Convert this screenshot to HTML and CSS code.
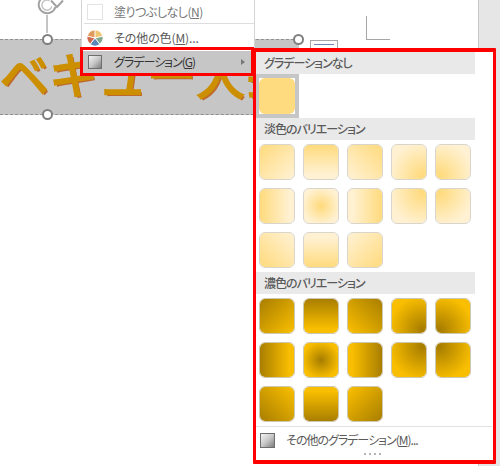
FILE: index.html
```html
<!DOCTYPE html>
<html lang="ja">
<head>
<meta charset="utf-8">
<title>グラデーション</title>
<link rel="stylesheet" href="styles.css">
</head>
<body>
<div class="stage">
  <div class="side-pane"></div>

  <svg class="rotate-icon" width="30" height="34" viewBox="0 0 30 34" aria-hidden="true">
    <path d="M17.5 -2 A8.5 8.5 0 1 0 20.4 7" fill="none" stroke="#a2a2a2" stroke-width="2"/>
    <path d="M14.5 0.8 A5 5 0 1 0 16.8 6.4" fill="none" stroke="#c4c4c4" stroke-width="1.5"/>
    <path d="M16 0.5 L22 7 L28 0.5" fill="#fff" stroke="#a2a2a2" stroke-width="2"/>
    <path d="M12 15 V33" stroke="#8a8a8a" stroke-width="1"/>
  </svg>

  <div class="banner"><span class="art-text">ベキュー大会</span></div>
  <span class="handle handle-top"></span>
  <span class="handle handle-bottom"></span>
  <span class="handle handle-right"></span>

  <div class="corner-mark"></div>
  <div class="mini-box"><span></span></div>

  <div class="menu">
    <div class="menu-row">
      <span class="menu-icon empty-box"></span>
      <span class="menu-label muted">塗りつぶしなし(<u>N</u>)</span>
    </div>
    <div class="menu-sep"></div>
    <div class="menu-row">
      <svg class="menu-icon" width="16" height="16" viewBox="0 0 16 16" aria-hidden="true">
        <path d="M8 8 L8 0.5 A7.5 7.5 0 0 1 15.3 6.2 Z" fill="#efc66f"/>
        <path d="M8 8 L15.3 6.2 A7.5 7.5 0 0 1 12.6 14 Z" fill="#7fa98f"/>
        <path d="M8 8 L12.6 14 A7.5 7.5 0 0 1 3.4 14 Z" fill="#5a86b8"/>
        <path d="M8 8 L3.4 14 A7.5 7.5 0 0 1 0.7 6.2 Z" fill="#cf6a50"/>
        <path d="M8 8 L0.7 6.2 A7.5 7.5 0 0 1 8 0.5 Z" fill="#e29a5c"/>
        <path d="M8 0.5 V8 L15.3 6.2 M8 8 L12.6 14 M8 8 L3.4 14 M8 8 L0.7 6.2" fill="none" stroke="#fff" stroke-width="1"/>
      </svg>
      <span class="menu-label">その他の色(<u>M</u>)...</span>
    </div>
    <div class="menu-row active">
      <span class="menu-icon grad-icon"></span>
      <span class="menu-label dark-text tight">グラデーション(<u>G</u>)</span>
      <span class="arrow"></span>
    </div>
  </div>
  <div class="menu-outline"></div>

  <div class="submenu">
    <div class="section-head">グラデーションなし</div>
    <div class="none-row"><div class="none-cell"><div class="none-back"><span class="swatch solid"></span></div></div></div>

    <div class="section-head">淡色のバリエーション</div>
    <div class="swatches light">
      <span class="swatch tl"></span><span class="swatch top"></span><span class="swatch tr"></span><span class="swatch rbr"></span><span class="swatch rbl"></span>
      <span class="swatch left"></span><span class="swatch rc"></span><span class="swatch right"></span><span class="swatch rtr"></span><span class="swatch rtl"></span>
      <span class="swatch bl"></span><span class="swatch bottom"></span><span class="swatch br"></span>
    </div>

    <div class="section-head">濃色のバリエーション</div>
    <div class="swatches deep">
      <span class="swatch tl"></span><span class="swatch top"></span><span class="swatch tr"></span><span class="swatch rbr"></span><span class="swatch rbl"></span>
      <span class="swatch left"></span><span class="swatch rc"></span><span class="swatch right"></span><span class="swatch rtr"></span><span class="swatch rtl"></span>
      <span class="swatch bl"></span><span class="swatch bottom"></span><span class="swatch br"></span>
    </div>

    <div class="more-row">
      <span class="grad-icon small"></span>
      <span class="menu-label tight">その他のグラデーション(<u>M</u>)...</span>
    </div>
    <div class="grip"><i></i><i></i><i></i><i></i></div>
  </div>
</div>
</body>
</html>
```

FILE: styles.css
```css
* { box-sizing: border-box; }

html, body {
  margin: 0;
  padding: 0;
  background: #fff;
}

.stage {
  position: relative;
  width: 500px;
  height: 466px;
  overflow: hidden;
  background: #fff;
  font-family: "Noto Sans CJK JP", "Noto Sans", sans-serif;
  font-size: 12px;
  font-feature-settings: "palt";
  color: #555;
}

.side-pane {
  position: absolute;
  left: 478px;
  top: 0;
  width: 22px;
  height: 466px;
  background: #e6e6e6;
  border-left: 1px solid #c6c6c6;
}

.rotate-icon {
  position: absolute;
  left: 35px;
  top: 0;
}

.banner {
  position: absolute;
  left: 0;
  top: 39px;
  width: 299px;
  height: 76px;
  overflow: hidden;
  background: #c6c6c6;
  border-top: 1px dashed #8f8f8f;
  border-bottom: 1px dashed #8f8f8f;
}

.art-text {
  display: block;
  margin: -4px 0 0 0;
  font-size: 49px;
  line-height: 74px;
  font-weight: 400;
  font-feature-settings: normal;
  white-space: nowrap;
  color: #cc8f00;
  -webkit-text-stroke: 2px #cc8f00;
  text-shadow: 2px 2px 0 #bd6a2c;
}

.handle {
  position: absolute;
  width: 11px;
  height: 11px;
  border-radius: 50%;
  background: #fff;
  border: 2px solid #7f7f7f;
}
.handle-top { left: 42px; top: 34px; }
.handle-bottom { left: 42px; top: 109px; }
.handle-right { left: 293px; top: 34px; }

.corner-mark {
  position: absolute;
  left: 366px;
  top: 16px;
  width: 24px;
  height: 24px;
  border-left: 1px solid #a6a6a6;
  border-bottom: 1px solid #a6a6a6;
}

.mini-box {
  position: absolute;
  left: 310px;
  top: 40px;
  width: 28px;
  height: 10px;
  border: 1px solid #a6a6a6;
  padding: 3px 3px 0;
}
.mini-box span {
  display: block;
  height: 1px;
  background: #6f86b5;
}

.menu {
  position: absolute;
  left: 81px;
  top: 0;
  width: 174px;
  height: 75px;
  padding: 1px 0 0 1px;
  background: #fff;
  border-left: 1px solid #d4d4d4;
  border-right: 1px solid #d4d4d4;
}

.menu-row {
  display: flex;
  align-items: center;
  height: 22px;
  padding-left: 4px;
}

.menu-icon {
  flex: none;
  width: 16px;
  height: 16px;
}

.empty-box {
  border: 1px solid #e3e3e3;
  background: #fff;
}

.menu-label {
  margin-left: 11px;
  white-space: nowrap;
  font-size: 12px;
  line-height: 16px;
  letter-spacing: -0.1px;
  color: #5a5a5a;
}
.menu-label.muted { color: #777; letter-spacing: -0.5px; }
.menu-label.dark-text { color: #333; }
.menu-label.tight { letter-spacing: -1px; }
.menu-label u { text-underline-offset: 1px; }

.menu-sep {
  height: 1px;
  margin: 0 0 3px 1px;
  background: #dedede;
}

.menu-row.active {
  margin-top: 2px;
  background: #c6c6c6;
}

.grad-icon {
  display: block;
  flex: none;
  width: 15px;
  height: 15px;
  border: 1px solid #6e6e6e;
  background: linear-gradient(135deg, #f4f4f4 0%, #c8c8c8 50%, #7d7d7d 100%);
}
.menu-row .grad-icon { width: 14px; height: 14px; margin: 0 1px; }

.arrow {
  width: 0;
  height: 0;
  margin-left: auto;
  margin-right: 9px;
  border-left: 4px solid #777;
  border-top: 3px solid transparent;
  border-bottom: 3px solid transparent;
}

.menu-outline {
  position: absolute;
  left: 80px;
  top: 47px;
  width: 174px;
  height: 29px;
  border: 3px solid #f00;
}

.submenu {
  position: absolute;
  left: 253px;
  top: 48px;
  width: 243px;
  height: 416px;
  background: #fff;
  border: 3px solid #f00;
  border-top-width: 4px;
  border-bottom-width: 4px;
  border-radius: 1px;
}

.section-head {
  width: 219px;
  height: 22px;
  padding-left: 8px;
  background: #e9e9e9;
  font-size: 12px;
  font-weight: 500;
  line-height: 22px;
  letter-spacing: -1px;
  color: #5a5a5a;
}

.none-row {
  height: 44px;
}

.none-cell {
  width: 43px;
  height: 44px;
  padding: 4px 4px 4px 3px;
  background: #c6c6c6;
}

.none-back {
  width: 36px;
  height: 36px;
  background: #fff;
}

.swatch {
  display: block;
  width: 36px;
  height: 36px;
  border-radius: 6px;
}

.solid {
  background: #ffdb7f;
}

.swatches {
  display: grid;
  grid-template-columns: repeat(5, 36px);
  grid-auto-rows: 36px;
  gap: 8px;
  padding: 4px 0 4px 3px;
  width: 219px;
}

.swatches .swatch {
  border: 1px solid;
  background-origin: border-box;
  background-clip: padding-box;
}

.light { --a: #ffda7b; --b: #fff1d2; }
.light .swatch { border-color: #d9d5cb; }
.deep { --a: #a67c00; --b: #f9be00; }
.deep .swatch { border-color: #cfc8b0; }

.tl { background-image: linear-gradient(135deg, var(--a), var(--b) 95%); }
.tr { background-image: linear-gradient(225deg, var(--a), var(--b) 95%); }
.bl { background-image: linear-gradient(45deg, var(--a), var(--b) 95%); }
.br { background-image: linear-gradient(315deg, var(--a), var(--b) 95%); }
.top { background-image: linear-gradient(180deg, var(--a), var(--b) 85%); }
.bottom { background-image: linear-gradient(0deg, var(--a), var(--b) 85%); }
.left { background-image: linear-gradient(90deg, var(--a), var(--b) 85%); }
.right { background-image: linear-gradient(270deg, var(--a), var(--b) 85%); }
.rc { background-image: radial-gradient(circle at 50% 50%, var(--a), var(--b) 72%); }
.rtl { background-image: radial-gradient(circle at 12% 12%, var(--a), var(--b) 75%); }
.rtr { background-image: radial-gradient(circle at 88% 12%, var(--a), var(--b) 75%); }
.rbl { background-image: radial-gradient(circle at 12% 88%, var(--a), var(--b) 75%); }
.rbr { background-image: radial-gradient(circle at 88% 88%, var(--a), var(--b) 75%); }

.more-row {
  display: flex;
  align-items: center;
  width: 236px;
  height: 27px;
  padding-left: 4px;
  border-top: 1px solid #e2e2e2;
}

.grip {
  display: flex;
  justify-content: center;
  gap: 3px;
  width: 233px;
}
.grip i {
  display: block;
  width: 2px;
  height: 2px;
  background: #b5b5b5;
}
```
